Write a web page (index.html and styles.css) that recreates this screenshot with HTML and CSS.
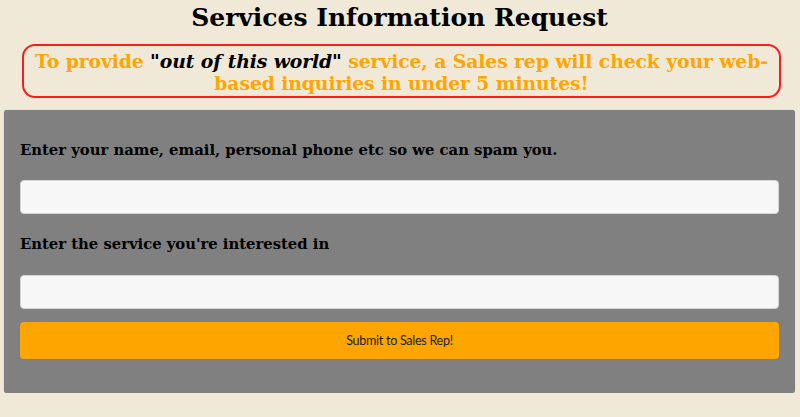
FILE: index.html
```html
<!DOCTYPE html>
<html>
<head>
<meta charset="utf-8">
<link rel="stylesheet" href="styles.css">
</head>
<body>
<h2 class="title">Services Information Request</h2>
<div class="notice">To provide <span class="quote">"<em>out of this world</em>"</span> service, a Sales rep will check your web-<br>based inquiries in under 5 minutes!</div>
<form class="panel">
  <label class="label">Enter your name, email, personal phone etc so we can spam you.</label>
  <input class="field" type="text">
  <label class="label">Enter the service you're interested in</label>
  <input class="field" type="text">
  <button class="submit" type="button">Submit to Sales Rep!</button>
</form>
</body>
</html>
```
FILE: styles.css
```css
html, body {
  margin: 0;
  padding: 0;
}
body {
  background: #f1e9d8;
  font-family: "DejaVu Serif", serif;
  padding: 3px 5px 0 4px;
}
.title {
  margin: 0 0 11px;
  text-align: center;
  font-size: 25px;
  line-height: 30px;
  font-weight: bold;
  color: #000;
}
.notice {
  margin: 0 14px 12px 18px;
  border: 2px solid #ff1a1a;
  border-radius: 13px;
  padding: 4px 0 2px;
  text-align: center;
  color: #ffa500;
  font-size: 18.8px;
  line-height: 22px;
  font-weight: bold;
  letter-spacing: -0.1px;
}
.quote {
  color: #000;
}
.panel {
  display: flex;
  flex-direction: column;
  background: #808080;
  border-radius: 3px;
  padding: 30px 16px 34px;
  box-shadow: 0 0 1px rgba(0,0,0,0.35);
}
.label {
  font-size: 14.8px;
  font-weight: bold;
  line-height: 20px;
  color: #000;
  margin-bottom: 20px;
}
.field + .label {
  margin-bottom: 21px;
}
.field {
  height: 34px;
  box-sizing: border-box;
  background: #f7f7f7;
  border: 1px solid #d6d6d6;
  border-radius: 4px;
  margin: 0 0 20px;
}
.field + .label + .field {
  margin-bottom: 13px;
}
.submit {
  height: 37px;
  background: #ffa500;
  border: none;
  border-radius: 4px;
  font-family: Lato, "Liberation Sans", sans-serif;
  font-size: 12.6px;
  letter-spacing: -0.3px;
  color: #222;
}
```
